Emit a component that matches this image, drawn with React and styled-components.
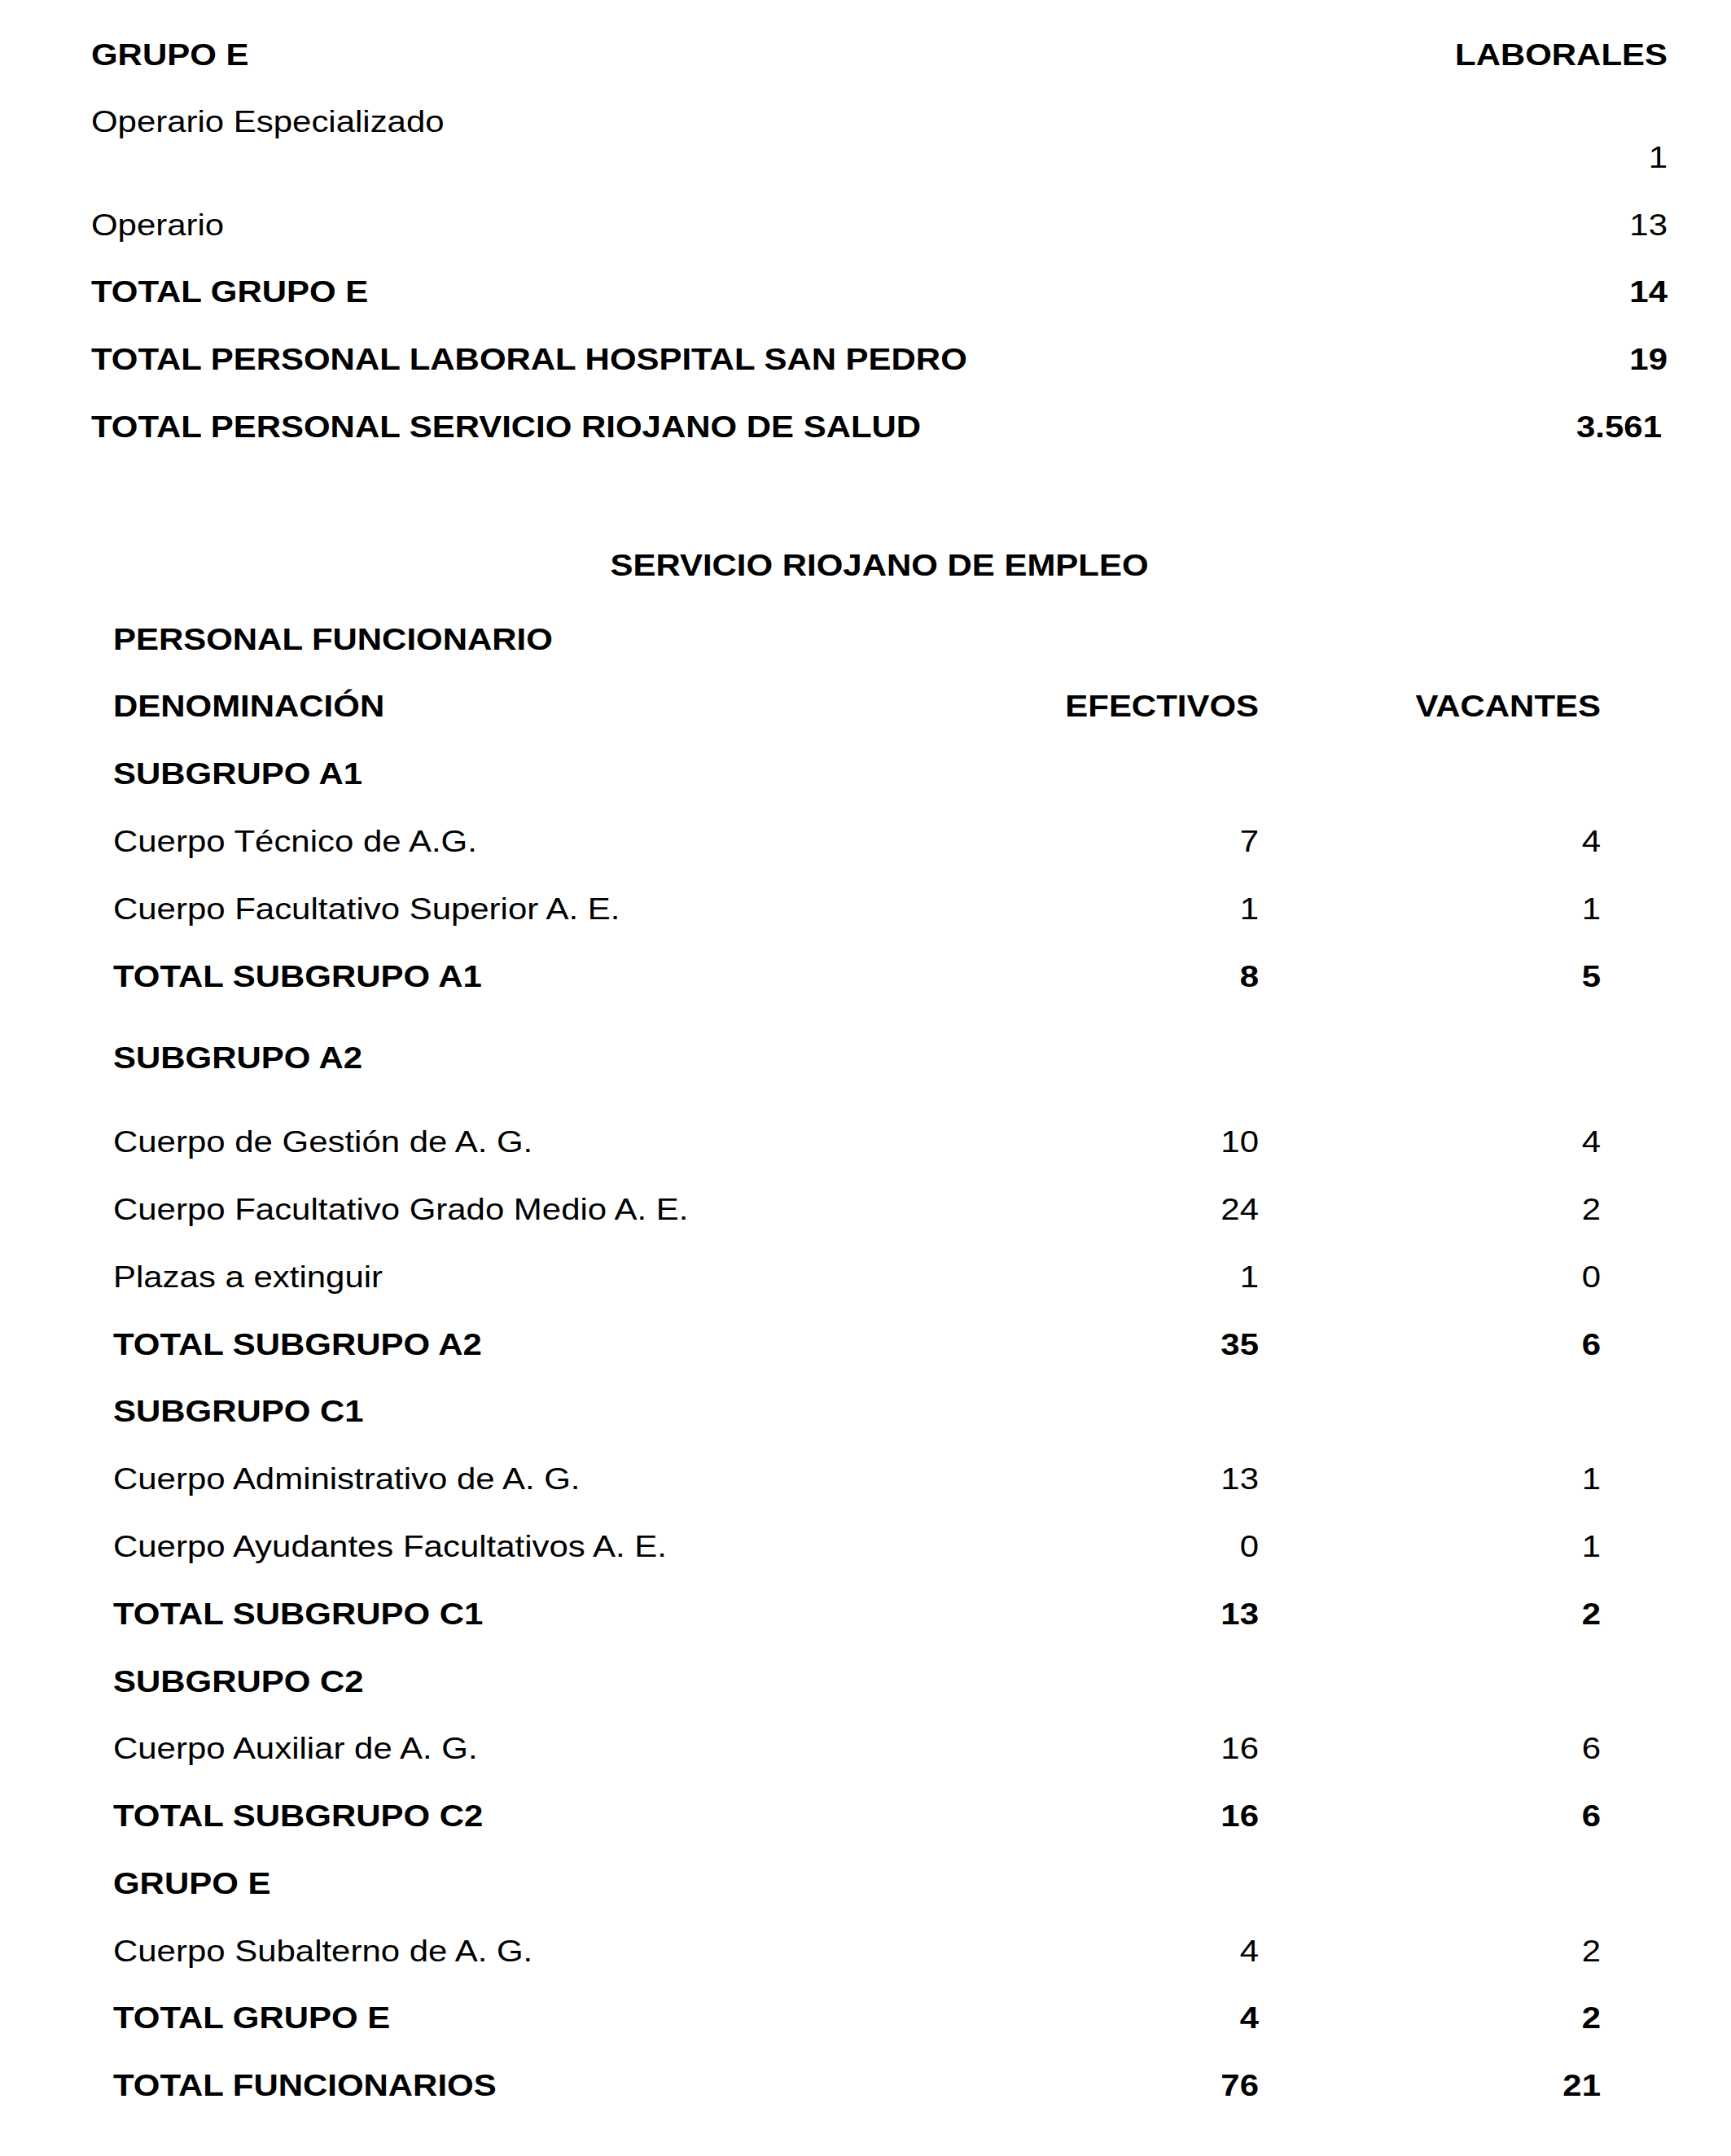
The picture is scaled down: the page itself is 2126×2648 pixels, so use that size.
import React from 'react'
import styled, { createGlobalStyle } from 'styled-components'

const STRETCH = 1.165
const ROW = 82.8
const px = (v) => `${v / STRETCH}px`

const GlobalStyle = createGlobalStyle`
  html, body {
    margin: 0;
    padding: 0;
    background: #fff;
    overflow: hidden;
  }
  body {
    font-family: "Liberation Sans", Arial, sans-serif;
    color: #000;
  }
`

const Page = styled.div`
  width: ${px(2126)};
  min-height: 2648px;
  box-sizing: border-box;
  padding-top: 26.6px;
  transform: scaleX(${STRETCH});
  transform-origin: 0 0;
  font-family: "Liberation Sans", Arial, sans-serif;
  font-size: 36px;
  color: #000;
`

const TopSection = styled.section`
  margin-left: ${px(112)};
  width: ${px(2048 - 112)};
`

const Line = styled.div`
  display: flex;
  justify-content: space-between;
  height: ${({ $tall }) => ($tall ? 126.2 : ROW)}px;
  line-height: ${ROW}px;
  font-weight: ${({ $bold }) => ($bold ? 700 : 400)};
`

const Label = styled.span`
  align-self: flex-start;
  white-space: nowrap;
`

const Amount = styled.span`
  align-self: ${({ $bottom }) => ($bottom ? 'flex-end' : 'flex-start')};
  padding-right: ${({ $pad }) => ($pad ? px($pad) : 0)};
  white-space: nowrap;
`

const Title = styled.h2`
  margin: 86.8px 0 8.2px;
  font-size: 36px;
  font-weight: 700;
  line-height: ${ROW}px;
  text-align: center;
`

const Table = styled.section`
  margin-left: ${px(139)};
  width: ${px(1966 - 139)};
`

const TableRow = styled.div`
  display: grid;
  grid-template-columns: ${px(1546 - 139 - 340)} ${px(340)} ${px(1966 - 1546)};
  line-height: ${ROW}px;
  margin-top: ${({ $before }) => $before || 0}px;
  margin-bottom: ${({ $after }) => $after || 0}px;
  font-weight: ${({ $bold }) => ($bold ? 700 : 400)};
`

const Cell = styled.span`
  white-space: nowrap;
`

const Num = styled.span`
  text-align: right;
  white-space: nowrap;
`

const laborales = [
  { label: 'GRUPO E', value: 'LABORALES', bold: true },
  { label: 'Operario Especializado', value: '1', tall: true },
  { label: 'Operario', value: '13' },
  { label: 'TOTAL GRUPO E', value: '14', bold: true },
  { label: 'TOTAL PERSONAL LABORAL HOSPITAL SAN PEDRO', value: '19', bold: true },
  { label: 'TOTAL PERSONAL SERVICIO RIOJANO DE SALUD', value: '3.561', bold: true, pad: 7 }
]

const funcionarios = [
  { label: 'PERSONAL FUNCIONARIO', bold: true },
  { label: 'DENOMINACIÓN', ef: 'EFECTIVOS', va: 'VACANTES', bold: true },
  { label: 'SUBGRUPO A1', bold: true },
  { label: 'Cuerpo Técnico de A.G.', ef: '7', va: '4' },
  { label: 'Cuerpo Facultativo Superior A. E.', ef: '1', va: '1' },
  { label: 'TOTAL SUBGRUPO A1', ef: '8', va: '5', bold: true },
  { label: 'SUBGRUPO A2', bold: true, before: 18, after: 20 },
  { label: 'Cuerpo de Gestión de A. G.', ef: '10', va: '4' },
  { label: 'Cuerpo Facultativo Grado Medio A. E.', ef: '24', va: '2' },
  { label: 'Plazas a extinguir', ef: '1', va: '0' },
  { label: 'TOTAL SUBGRUPO A2', ef: '35', va: '6', bold: true },
  { label: 'SUBGRUPO C1', bold: true },
  { label: 'Cuerpo Administrativo de A. G.', ef: '13', va: '1' },
  { label: 'Cuerpo Ayudantes Facultativos A. E.', ef: '0', va: '1' },
  { label: 'TOTAL SUBGRUPO C1', ef: '13', va: '2', bold: true },
  { label: 'SUBGRUPO C2', bold: true },
  { label: 'Cuerpo Auxiliar de A. G.', ef: '16', va: '6' },
  { label: 'TOTAL SUBGRUPO C2', ef: '16', va: '6', bold: true },
  { label: 'GRUPO E', bold: true },
  { label: 'Cuerpo Subalterno de A. G.', ef: '4', va: '2' },
  { label: 'TOTAL GRUPO E', ef: '4', va: '2', bold: true },
  { label: 'TOTAL FUNCIONARIOS', ef: '76', va: '21', bold: true }
]

export default function App() {
  return (
    <>
      <GlobalStyle />
      <Page>
        <TopSection>
          {laborales.map((row, i) => (
            <Line key={i} $bold={row.bold} $tall={row.tall}>
              <Label>{row.label}</Label>
              <Amount $bottom={row.tall} $pad={row.pad}>
                {row.value}
              </Amount>
            </Line>
          ))}
          <Title>SERVICIO RIOJANO DE EMPLEO</Title>
        </TopSection>
        <Table>
          {funcionarios.map((row, i) => (
            <TableRow key={i} $bold={row.bold} $before={row.before} $after={row.after}>
              <Cell>{row.label}</Cell>
              <Num>{row.ef}</Num>
              <Num>{row.va}</Num>
            </TableRow>
          ))}
        </Table>
      </Page>
    </>
  )
}
